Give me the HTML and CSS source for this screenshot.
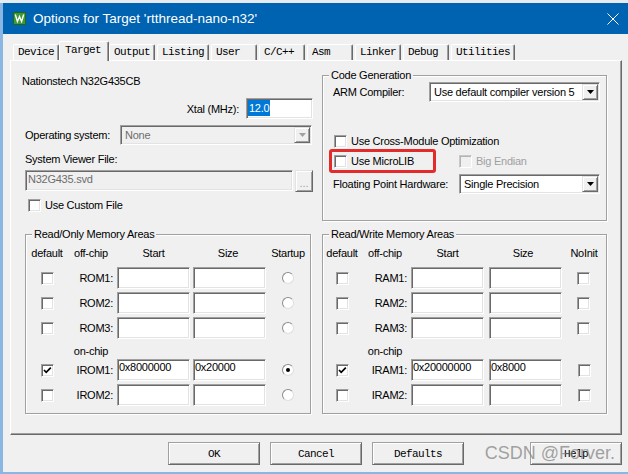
FILE: index.html
```html
<!DOCTYPE html>
<html>
<head>
<meta charset="utf-8">
<title>Options for Target</title>
<link rel="stylesheet" href="styles.css">
</head>
<body>
<div class="strip"></div>
<div class="window">
  <div class="titlebar">
    <svg class="app-icon" width="13" height="13" viewBox="0 0 13 13">
      <rect x="0.5" y="0.5" width="12" height="12" fill="#3d9a38" stroke="#22661f"/>
      <path d="M2.3 2.5 L4.4 9.5 L6.5 4.6 L8.6 9.5 L10.7 2.5" fill="none" stroke="#fff" stroke-width="1.4"/>
    </svg>
    <span class="title">Options for Target 'rtthread-nano-n32'</span>
    <svg class="close" width="12" height="12" viewBox="0 0 12 12">
      <path d="M0.5 0.5 L11.5 11.5 M11.5 0.5 L0.5 11.5" stroke="#fff" stroke-width="1"/>
    </svg>
  </div>
  <div class="client">
    <div class="tabs">
      <span class="tab">Device</span>
      <span class="tab active">Target</span>
      <span class="tab">Output</span>
      <span class="tab">Listing</span>
      <span class="tab">User</span>
      <span class="tab">C/C++</span>
      <span class="tab">Asm</span>
      <span class="tab">Linker</span>
      <span class="tab">Debug</span>
      <span class="tab">Utilities</span>
    </div>
    <div class="page">
      <div class="device-col">
        <div class="dev-name">Nationstech N32G435CB</div>
        <div class="xtal-row">
          <span>Xtal (MHz):</span>
          <span class="field xtal"><span class="sel">12.0</span></span>
        </div>
        <div class="os-row">
          <span>Operating system:</span>
          <span class="combo disabled os">
            <span class="combo-text">None</span>
            <span class="drop raised"><svg width="7" height="4" viewBox="0 0 7 4"><path d="M0 0H7L3.5 4Z" fill="#a0a0a0"/></svg></span>
          </span>
        </div>
        <div class="svf-label">System Viewer File:</div>
        <div class="file-row">
          <span class="field disabled file">N32G435.svd</span>
          <span class="browse raised">...</span>
        </div>
        <div class="custom-row check-item"><span class="cb"></span><span>Use Custom File</span></div>
      </div>

      <fieldset class="group codegen">
        <legend>Code Generation</legend>
        <div class="cg-row">
          <span>ARM Compiler:</span>
          <span class="combo arm">
            <span class="combo-text">Use default compiler version 5</span>
            <span class="drop raised"><svg width="7" height="4" viewBox="0 0 7 4"><path d="M0 0H7L3.5 4Z" fill="#000"/></svg></span>
          </span>
        </div>
        <div class="cg-check cross">
          <span class="check-item"><span class="cb"></span><span>Use Cross-Module Optimization</span></span>
        </div>
        <div class="cg-check micro">
          <span class="check-item microlib"><span class="cb"></span><span>Use MicroLIB</span></span>
          <span class="check-item disabled"><span class="cb"></span><span>Big Endian</span></span>
          <span class="annot"></span>
        </div>
        <div class="cg-row fph">
          <span>Floating Point Hardware:</span>
          <span class="combo fpu">
            <span class="combo-text">Single Precision</span>
            <span class="drop raised"><svg width="7" height="4" viewBox="0 0 7 4"><path d="M0 0H7L3.5 4Z" fill="#000"/></svg></span>
          </span>
        </div>
      </fieldset>

      <fieldset class="group mem ro">
        <legend>Read/Only Memory Areas</legend>
        <div class="mem-grid">
          <span class="hd">default</span><span class="hd">off-chip</span><span class="hd">Start</span><span class="hd">Size</span><span class="hd">Startup</span>

          <span class="ctr"><span class="cb"></span></span><span class="lbl">ROM1:</span><span class="field"></span><span class="field sz"></span><span class="ctr"><span class="radio"></span></span>
          <span class="ctr"><span class="cb"></span></span><span class="lbl">ROM2:</span><span class="field"></span><span class="field sz"></span><span class="ctr"><span class="radio"></span></span>
          <span class="ctr"><span class="cb"></span></span><span class="lbl">ROM3:</span><span class="field"></span><span class="field sz"></span><span class="ctr"><span class="radio"></span></span>

          <span class="onchip">on-chip</span>

          <span class="ctr first"><span class="cb"><svg width="11" height="11" viewBox="0 0 11 11"><path d="M2 5 L4.2 7.3 L8.8 2.6" fill="none" stroke="#000" stroke-width="1.7"/></svg></span></span><span class="lbl">IROM1:</span><span class="field">0x8000000</span><span class="field sz">0x20000</span><span class="ctr"><span class="radio on"></span></span>
          <span class="ctr"><span class="cb"></span></span><span class="lbl">IROM2:</span><span class="field"></span><span class="field sz"></span><span class="ctr"><span class="radio"></span></span>
        </div>
      </fieldset>

      <fieldset class="group mem rw">
        <legend>Read/Write Memory Areas</legend>
        <div class="mem-grid">
          <span class="hd">default</span><span class="hd">off-chip</span><span class="hd">Start</span><span class="hd">Size</span><span class="hd">NoInit</span>

          <span class="ctr"><span class="cb"></span></span><span class="lbl">RAM1:</span><span class="field"></span><span class="field sz"></span><span class="ctr"><span class="cb"></span></span>
          <span class="ctr"><span class="cb"></span></span><span class="lbl">RAM2:</span><span class="field"></span><span class="field sz"></span><span class="ctr"><span class="cb"></span></span>
          <span class="ctr"><span class="cb"></span></span><span class="lbl">RAM3:</span><span class="field"></span><span class="field sz"></span><span class="ctr"><span class="cb"></span></span>

          <span class="onchip">on-chip</span>

          <span class="ctr first"><span class="cb"><svg width="11" height="11" viewBox="0 0 11 11"><path d="M2 5 L4.2 7.3 L8.8 2.6" fill="none" stroke="#000" stroke-width="1.7"/></svg></span></span><span class="lbl">IRAM1:</span><span class="field">0x20000000</span><span class="field sz">0x8000</span><span class="ctr"><span class="cb"></span></span>
          <span class="ctr"><span class="cb"></span></span><span class="lbl">IRAM2:</span><span class="field"></span><span class="field sz"></span><span class="ctr"><span class="cb"></span></span>
        </div>
      </fieldset>
    </div>

    <div class="buttons">
      <span class="btn">OK</span>
      <span class="btn">Cancel</span>
      <span class="btn">Defaults</span>
      <span class="btn help">Help</span>
      <span class="watermark">CSDN @Forver.</span>
    </div>
  </div>
</div>
</body>
</html>
```

FILE: styles.css
```css
* { box-sizing: border-box; }
html, body { margin: 0; padding: 0; }
body {
  width: 628px;
  height: 474px;
  overflow: hidden;
  background: #e7eaee;
  font-family: "Liberation Sans", Arial, sans-serif;
  font-size: 11px;
  line-height: 14px;
  letter-spacing: -0.25px;
  color: #000;
}

.strip { height: 3px; background: #e7eaee; }

.window {
  height: 471px;
  display: flex;
  flex-direction: column;
  border-left: 3px solid #8ab6e4;
}

/* title bar */
.titlebar {
  flex: none;
  height: 31px;
  background: #0063b1;
  color: #fff;
  display: flex;
  align-items: center;
  padding-left: 10px;
}
.app-icon { flex: none; }
.title {
  margin-left: 7px;
  font-size: 13.5px;
  letter-spacing: 0;
  white-space: nowrap;
}
.close { flex: none; margin-left: auto; margin-right: 9px; }

/* client */
.client {
  flex: 1;
  background: #f0f0f0;
  border-bottom: 2px solid #8ab6e4;
  display: flex;
  flex-direction: column;
}

/* tabs */
.tabs {
  display: flex;
  align-items: flex-end;
  height: 20px;
  margin: 7px 0 0 10px;
  font-family: "Liberation Mono", "Courier New", monospace;
  font-size: 11px;
  letter-spacing: -0.6px;
}
.tab {
  display: flex;
  align-items: center;
  height: 16px;
  min-width: 46px;
  padding: 0 4px 2px 4px;
  margin: 0 2px 1px 0;
  background: #f0f0f0;
  border: 1px solid;
  border-bottom: none;
  border-color: #fff #696969 transparent #fff;
  border-radius: 2px 2px 0 0;
  box-shadow: inset -1px 0 #a0a0a0;
  white-space: nowrap;
}
.tab.active {
  position: relative;
  z-index: 1;
  height: 20px;
  margin: 0 0 0 -2px;
  padding: 0 7px 4px 5px;
}

/* tab page */
.page {
  margin: -1px 0 0 7px;
  width: 612px;
  height: 375px;
  border: 1px solid;
  border-color: #fff #696969 #696969 #fff;
  box-shadow: inset -1px -1px #a0a0a0;
  padding-left: 11px;
  display: grid;
  grid-template-columns: 291px 285px;
  grid-template-rows: auto auto;
  align-content: start;
  column-gap: 9px;
  row-gap: 6px;
}

/* common controls */
.cb {
  flex: none;
  display: inline-flex;
  align-items: center;
  justify-content: center;
  width: 13px;
  height: 13px;
  background: #fff;
  border: 1px solid;
  border-color: #a0a0a0 #fff #fff #a0a0a0;
  box-shadow: inset 1px 1px #696969, inset -1px -1px #e3e3e3;
}
.radio {
  display: inline-block;
  position: relative;
  width: 12px;
  height: 12px;
  border-radius: 50%;
  background: #fff;
  border: 1px solid;
  border-color: #8c8c8c #dedede #dedede #8c8c8c;
}
.radio.on::after {
  content: "";
  position: absolute;
  left: 3px;
  top: 3px;
  width: 4px;
  height: 4px;
  border-radius: 50%;
  background: #000;
}
.field {
  display: block;
  height: 22px;
  background: #fff;
  border: 1px solid;
  border-color: #a0a0a0 #fff #fff #a0a0a0;
  box-shadow: inset 1px 1px #696969, inset -1px -1px #e3e3e3;
  padding: 0 1px;
  line-height: 14px;
  white-space: nowrap;
  overflow: hidden;
}
.field.disabled { background: #f0f0f0; color: #6d6d6d; }
.raised {
  background: #f0f0f0;
  border: 1px solid;
  border-color: #e3e3e3 #696969 #696969 #e3e3e3;
  box-shadow: inset 1px 1px #fff, inset -1px -1px #a0a0a0;
}
.combo {
  display: flex;
  align-items: center;
  height: 20px;
  padding: 1px;
  background: #fff;
  border: 1px solid;
  border-color: #a0a0a0 #fff #fff #a0a0a0;
  box-shadow: inset 1px 1px #696969, inset -1px -1px #e3e3e3;
}
.combo.disabled { background: #f0f0f0; color: #6d6d6d; }
.combo-text { flex: 1; padding-left: 3px; white-space: nowrap; overflow: hidden; }
.drop {
  flex: none;
  width: 16px;
  height: 16px;
  display: flex;
  align-items: center;
  justify-content: center;
}
.check-item { display: flex; align-items: center; gap: 4px; white-space: nowrap; }
.check-item.disabled { color: #a0a0a0; }
.check-item.disabled .cb { background: #f0f0f0; border-color: #c8c8c8 #fff #fff #c8c8c8; box-shadow: inset 1px 1px #b4b4b4; }

/* left top column */
.device-col { padding-top: 13px; }
.dev-name { height: 14px; white-space: nowrap; }
.xtal-row {
  margin-top: 10px;
  display: flex;
  justify-content: flex-end;
  align-items: center;
  gap: 7px;
}
.field.xtal { width: 67px; height: 21px; padding: 1px 1px 0; }
.sel {
  display: inline-block;
  background: #0078d7;
  color: #fff;
  line-height: 16px;
  padding: 0 1px;
}
.os-row {
  margin-top: 6px;
  padding-left: 3px;
  display: flex;
  align-items: center;
}
.combo.os { margin-left: auto; margin-right: 1px; width: 192px; }
.svf-label { margin-top: 7px; padding-left: 3px; height: 14px; }
.file-row {
  margin-top: 4px;
  padding-left: 3px;
  display: flex;
  align-items: flex-start;
  gap: 2px;
}
.field.file { flex: 1; height: 21px; line-height: 17px; padding-left: 2px; }
.browse {
  flex: none;
  width: 18px;
  height: 22px;
  color: #a0a0a0;
  text-align: center;
  line-height: 24px;
  letter-spacing: 0;
}
.custom-row { margin-top: 6px; padding-left: 6px; }

/* group boxes */
.group {
  margin: 0;
  min-width: 0;
  border: 1px solid #a0a0a0;
  box-shadow: inset 1px 1px #fff, 1px 1px #fff;
}
.group legend {
  padding: 0 2px;
  line-height: 14px;
  background: #f0f0f0;
  white-space: nowrap;
}

.codegen { margin-top: 7px; padding: 0 6px 26px 10px; }
.codegen legend { margin-left: -4px; }
.cg-row {
  display: flex;
  align-items: center;
  justify-content: space-between;
  height: 20px;
}
.combo.arm { width: 171px; }
.combo.fpu { width: 141px; }
.cg-row.fph { margin-top: 6px; }
.cg-check { display: flex; align-items: center; height: 14px; padding-left: 1px; }
.cg-check.cross { margin-top: 32px; }
.cg-check.micro { margin-top: 6px; position: relative; }
.check-item.microlib { width: 125px; }
.annot {
  position: absolute;
  left: -4px;
  top: -5px;
  width: 107px;
  height: 24px;
  border: 3px solid #e42b2b;
  border-radius: 3px;
}

/* memory areas */
.mem { padding: 0 0 7px 0; }
.mem legend { margin-left: 6px; }
.mem.ro { margin: 0 2px 0 3px; }
.mem-grid {
  display: grid;
  grid-template-rows: 23px 22px 22px 22px 14px 22px 22px;
  row-gap: 3px;
  align-items: center;
}
.ro .mem-grid { grid-template-columns: 36px 52px 73px 76px 1fr; padding-left: 3px; }
.rw .mem-grid { grid-template-columns: 34px 52px 73px 78px 1fr; padding-left: 2px; }
.hd { text-align: center; white-space: nowrap; }
.ctr { display: flex; justify-content: center; align-items: center; }
.ctr.first { grid-column: 1; }
.lbl { text-align: right; padding-right: 4px; white-space: nowrap; }
.mem-grid .field { width: 73px; }
.mem-grid .field.sz { justify-self: end; }
.onchip {
  grid-column: 2;
  text-align: center;
  line-height: 19px;
  height: 14px;
  white-space: nowrap;
}
.rw .mem-grid .ctr:nth-child(5n) .cb { margin-left: -2px; }

/* bottom buttons */
.buttons {
  position: relative;
  display: flex;
  gap: 10px;
  margin-top: 7px;
  padding-left: 165px;
}
.btn {
  display: flex;
  align-items: center;
  justify-content: center;
  width: 92px;
  height: 23px;
  background: #f0f0f0;
  border: 1px solid;
  border-color: #a0a0a0 #696969 #696969 #a0a0a0;
  box-shadow: inset 1px 1px #fff, inset -1px -1px #a0a0a0;
  font-family: "Liberation Mono", "Courier New", monospace;
  font-size: 11px;
  letter-spacing: -0.6px;
}
.btn.help { margin-left: auto; margin-right: 6px; }
.watermark {
  position: absolute;
  right: 13px;
  top: 1px;
  font-size: 18px;
  line-height: 20px;
  letter-spacing: 0;
  color: rgba(128, 128, 128, 0.72);
  white-space: nowrap;
}
```
